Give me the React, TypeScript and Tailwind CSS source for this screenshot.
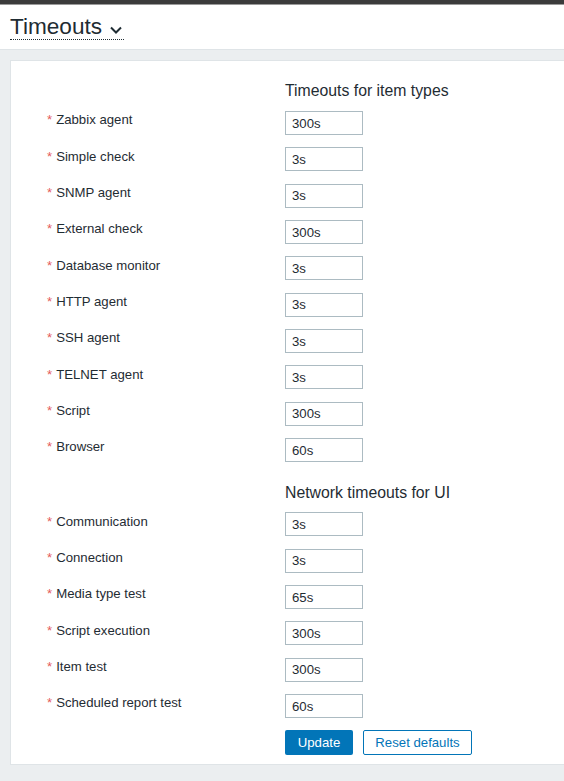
import React from "react";

const itemTypes: [string, string][] = [
  ["Zabbix agent", "300s"],
  ["Simple check", "3s"],
  ["SNMP agent", "3s"],
  ["External check", "300s"],
  ["Database monitor", "3s"],
  ["HTTP agent", "3s"],
  ["SSH agent", "3s"],
  ["TELNET agent", "3s"],
  ["Script", "300s"],
  ["Browser", "60s"],
];

const network: [string, string][] = [
  ["Communication", "3s"],
  ["Connection", "3s"],
  ["Media type test", "65s"],
  ["Script execution", "300s"],
  ["Item test", "300s"],
  ["Scheduled report test", "60s"],
];

function Row({ label, value }: { label: string; value: string }) {
  return (
    <div className="flex items-center h-[36.33px]">
      <div className="w-[274px] pl-[36px] text-[13.2px] text-[#1f2c33] -mt-[6px]">
        <span className="text-[#e45959] mr-[4px]">*</span>
        {label}
      </div>
      <input
        defaultValue={value}
        className="w-[78px] h-[24px] border border-[#acbbc2] bg-white px-[6px] text-[13.2px] text-[#1f2c33] outline-none"
        style={{ fontFamily: '"Liberation Sans", Arial, sans-serif' }}
      />
    </div>
  );
}

export default function App() {
  return (
    <div
      className="w-[564px] h-[781px] overflow-hidden bg-[#ebeef0]"
      style={{ fontFamily: '"Liberation Sans", Arial, sans-serif' }}
    >
      <div className="h-[4px] bg-[#3b3b3b]" />
      <div className="h-[1px] bg-[#9a9a9a]" />
      <div className="h-[45px] bg-white border-b border-[#dfe4e7] flex items-start pl-[10px] pt-[9px]">
        <div className="flex items-center border-b border-dotted border-[#1f2c33] pr-[1px] h-[26px]">
          <span className="text-[22.6px] leading-[26px] text-[#1f2c33]">Timeouts</span>
          <svg width="14" height="10" viewBox="0 0 14 10" className="ml-[7px] mt-[6px]">
            <path d="M2 2.5 L7 7.5 L12 2.5" fill="none" stroke="#1f2c33" strokeWidth="2" />
          </svg>
        </div>
      </div>
      <div className="ml-[10px] mt-[10px] w-[600px] h-[705px] bg-white border border-[#dfe4e7] pt-[21px]">
        <div className="pl-[274px] text-[15.8px] leading-[18px] text-[#1f2c33] mb-[5px]">
          Timeouts for item types
        </div>
        {itemTypes.map(([l, v]) => (
          <Row key={l} label={l} value={v} />
        ))}
        <div className="pl-[274px] text-[15.8px] leading-[18px] text-[#1f2c33] mt-[16px] mb-[4px]">
          Network timeouts for UI
        </div>
        {network.map(([l, v]) => (
          <Row key={l} label={l} value={v} />
        ))}
        <div className="pl-[274px] flex gap-[10px] mt-[6px]">
          <button className="h-[25px] w-[68px] bg-[#0275b8] text-white text-[13.2px] rounded-[2px]">
            Update
          </button>
          <button className="h-[25px] w-[109px] bg-white border border-[#0275b8] text-[#0275b8] text-[13.2px] rounded-[2px]">
            Reset defaults
          </button>
        </div>
      </div>
    </div>
  );
}
